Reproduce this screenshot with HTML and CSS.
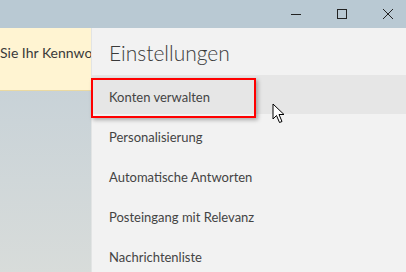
FILE: index.html
```html
<!DOCTYPE html>
<html lang="de">
<head>
<meta charset="utf-8">
<link rel="stylesheet" href="styles.css">
</head>
<body>
<div class="window">
  <div class="titlebar">
    <div class="controls">
      <span class="ctl"><svg width="12" height="12" viewBox="0 0 12 12"><path d="M1 6.5H11" stroke="#222" stroke-width="1"/></svg></span>
      <span class="ctl"><svg width="12" height="12" viewBox="0 0 12 12"><rect x="1.5" y="1.5" width="9" height="9" fill="none" stroke="#222" stroke-width="1"/></svg></span>
      <span class="ctl"><svg width="12" height="12" viewBox="0 0 12 12"><path d="M1 1L11 11M11 1L1 11" stroke="#222" stroke-width="1"/></svg></span>
    </div>
  </div>
  <div class="main">
    <div class="left">
      <div class="note">Sie Ihr Kennwort</div>
    </div>
    <div class="panel">
      <h1 class="title">Einstellungen</h1>
      <ul class="menu">
        <li class="item active">Konten verwalten</li>
        <li class="item">Personalisierung</li>
        <li class="item">Automatische Antworten</li>
        <li class="item">Posteingang mit Relevanz</li>
        <li class="item">Nachrichtenliste</li>
      </ul>
    </div>
  </div>
  <div class="callout"></div>
  <svg class="cursor" width="14" height="21" viewBox="0 0 14 21"><path d="M1 1V16L4.5 12.5L7.5 19.5L10 18.5L7 11.5H12Z" fill="#fff" stroke="#000" stroke-width="1" stroke-linejoin="miter"/></svg>
</div>
</body>
</html>
```
FILE: styles.css
```css
html, body {
  margin: 0;
  padding: 0;
}
body {
  width: 406px;
  height: 272px;
  overflow: hidden;
  font-family: Lato, "Noto Sans", sans-serif;
}
.window {
  position: relative;
  width: 406px;
  height: 272px;
  display: flex;
  flex-direction: column;
  overflow: hidden;
}
.titlebar {
  height: 29px;
  background: #b9c9d3;
  display: flex;
  justify-content: flex-end;
}
.controls {
  display: flex;
  margin-right: -5px;
}
.ctl {
  width: 46px;
  height: 28px;
  display: flex;
  align-items: center;
  justify-content: center;
}
.main {
  flex: 1;
  display: flex;
}
.left {
  width: 92px;
  background: linear-gradient(#c3cfd7, #d8dcda);
  overflow: hidden;
}
.note {
  height: 63px;
  box-sizing: border-box;
  padding-top: 15px;
  background: #fff4d2;
  border-bottom: 1px solid #ead9a2;
  color: #3a3a3a;
  font-size: 14px;
  line-height: 20px;
  white-space: nowrap;
}
.panel {
  flex: 1;
  background: #f2f2f2;
  box-shadow: -1px 0 0 #e2e4e4;
}
.title {
  margin: 0;
  padding: 12px 0 0 17px;
  height: 47px;
  box-sizing: border-box;
  font-size: 21px;
  font-weight: 300;
  color: #3a3a3a;
  line-height: 26px;
}
.menu {
  list-style: none;
  margin: 0;
  padding: 0;
}
.item {
  height: 40px;
  box-sizing: border-box;
  padding: 4px 0 0 17px;
  line-height: 38px;
  font-size: 13px;
  color: #444;
}
.item.active {
  background: #e6e6e6;
  height: 39px;
  padding-top: 3px;
}
.callout {
  position: absolute;
  left: 91px;
  top: 78px;
  width: 165px;
  height: 40px;
  box-sizing: border-box;
  border: 2px solid #ff0000;
  box-shadow: 2px 2px 4px rgba(0,0,0,0.3);
}
.cursor {
  position: absolute;
  left: 272px;
  top: 103px;
}
```
